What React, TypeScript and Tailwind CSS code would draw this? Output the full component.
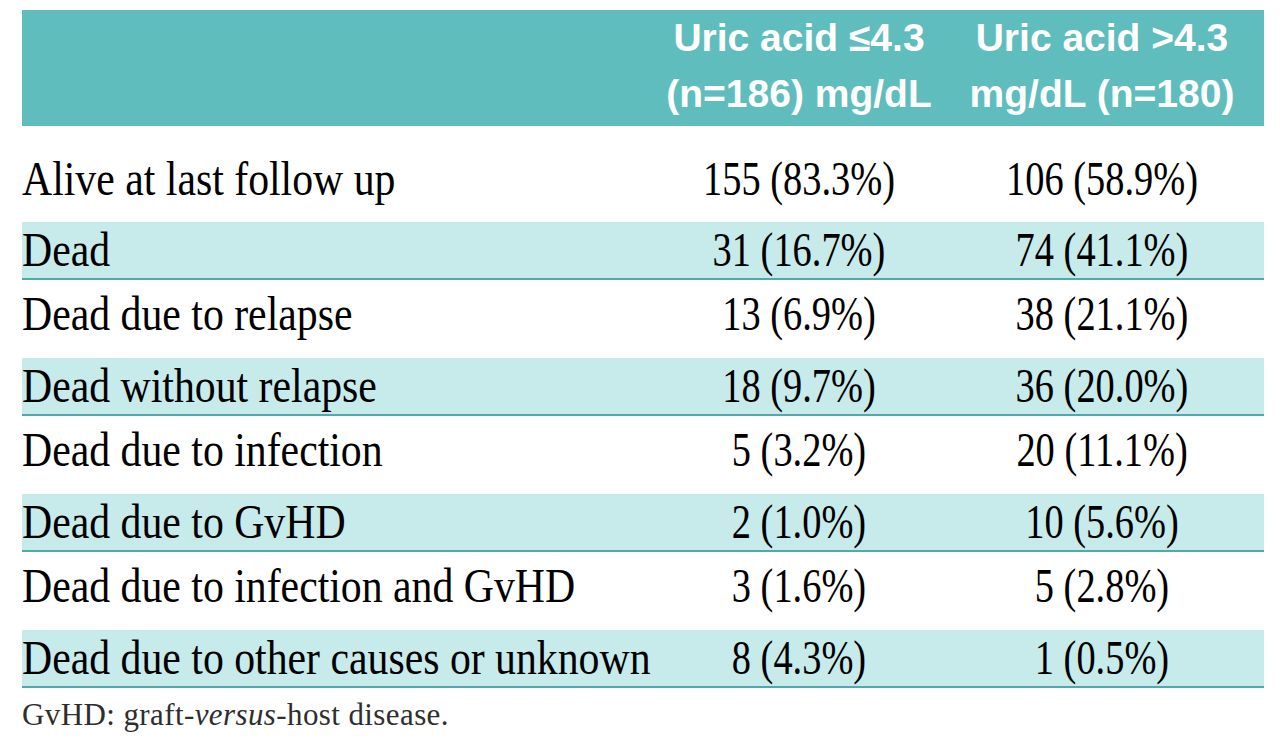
const rows = [
  { label: "Dead", a: "31 (16.7%)", b: "74 (41.1%)", shaded: true },
  { label: "Dead due to relapse", a: "13 (6.9%)", b: "38 (21.1%)", shaded: false },
  { label: "Dead without relapse", a: "18 (9.7%)", b: "36 (20.0%)", shaded: true },
  { label: "Dead due to infection", a: "5 (3.2%)", b: "20 (11.1%)", shaded: false },
  { label: "Dead due to GvHD", a: "2 (1.0%)", b: "10 (5.6%)", shaded: true },
  { label: "Dead due to infection and GvHD", a: "3 (1.6%)", b: "5 (2.8%)", shaded: false },
  { label: "Dead due to other causes or unknown", a: "8 (4.3%)", b: "1 (0.5%)", shaded: true },
];

const Label = ({ children }: { children: string }) => (
  <span className="inline-block origin-left scale-x-[0.87] whitespace-nowrap">{children}</span>
);

const Value = ({ children }: { children: string }) => (
  <span className="inline-block scale-x-[0.8] whitespace-nowrap">{children}</span>
);

const App = () => {
  return (
    <div className="w-[1280px] h-[739px] bg-white overflow-hidden">
      <div className="ml-[22px] w-[1242px] pt-[10px]">
        {/* header */}
        <div className="h-[116px] bg-[#5fbdbd] grid grid-cols-[628px_298px_316px] items-center pb-[8px] text-white font-['Liberation_Sans',sans-serif] font-bold text-[39px] leading-[56px]">
          <div />
          <div className="text-center whitespace-nowrap">
            Uric acid ≤4.3
            <br />
            (n=186) mg/dL
          </div>
          <div className="text-center whitespace-nowrap pr-[8px]">
            Uric acid &gt;4.3
            <br />
            mg/dL (n=180)
          </div>
        </div>

        {/* body */}
        <div className="font-['Liberation_Serif',serif] text-[48px] leading-[56px] text-black">
          <div className="h-[86px] pt-[20px]">
            <div className="h-[66px] grid grid-cols-[628px_298px_316px] items-center">
              <Label>Alive at last follow up</Label>
              <div className="text-center"><Value>155 (83.3%)</Value></div>
              <div className="text-center pr-[8px]"><Value>106 (58.9%)</Value></div>
            </div>
          </div>
          {rows.map((r) =>
            <div
              key={r.label}
              className={
                r.shaded
                  ? "h-[68px] grid grid-cols-[628px_298px_316px] items-center border-t-[10px] border-t-white border-b-2 border-b-[#4faaaa] bg-[#c7eaeb] pb-[6px]"
                  : "h-[68px] grid grid-cols-[628px_298px_316px] items-center"
              }
            >
              <Label>{r.label}</Label>
              <div className="text-center"><Value>{r.a}</Value></div>
              <div className="text-center pr-[8px]"><Value>{r.b}</Value></div>
            </div>
          )}
        </div>

        {/* footnote */}
        <p className="mt-[10px] font-['Liberation_Serif',serif] text-[31px] leading-[34px] tracking-[0.4px] text-[#2e2e2e]">
          GvHD: graft-<i>versus</i>-host disease.
        </p>
      </div>
    </div>
  );
};

export default App;
